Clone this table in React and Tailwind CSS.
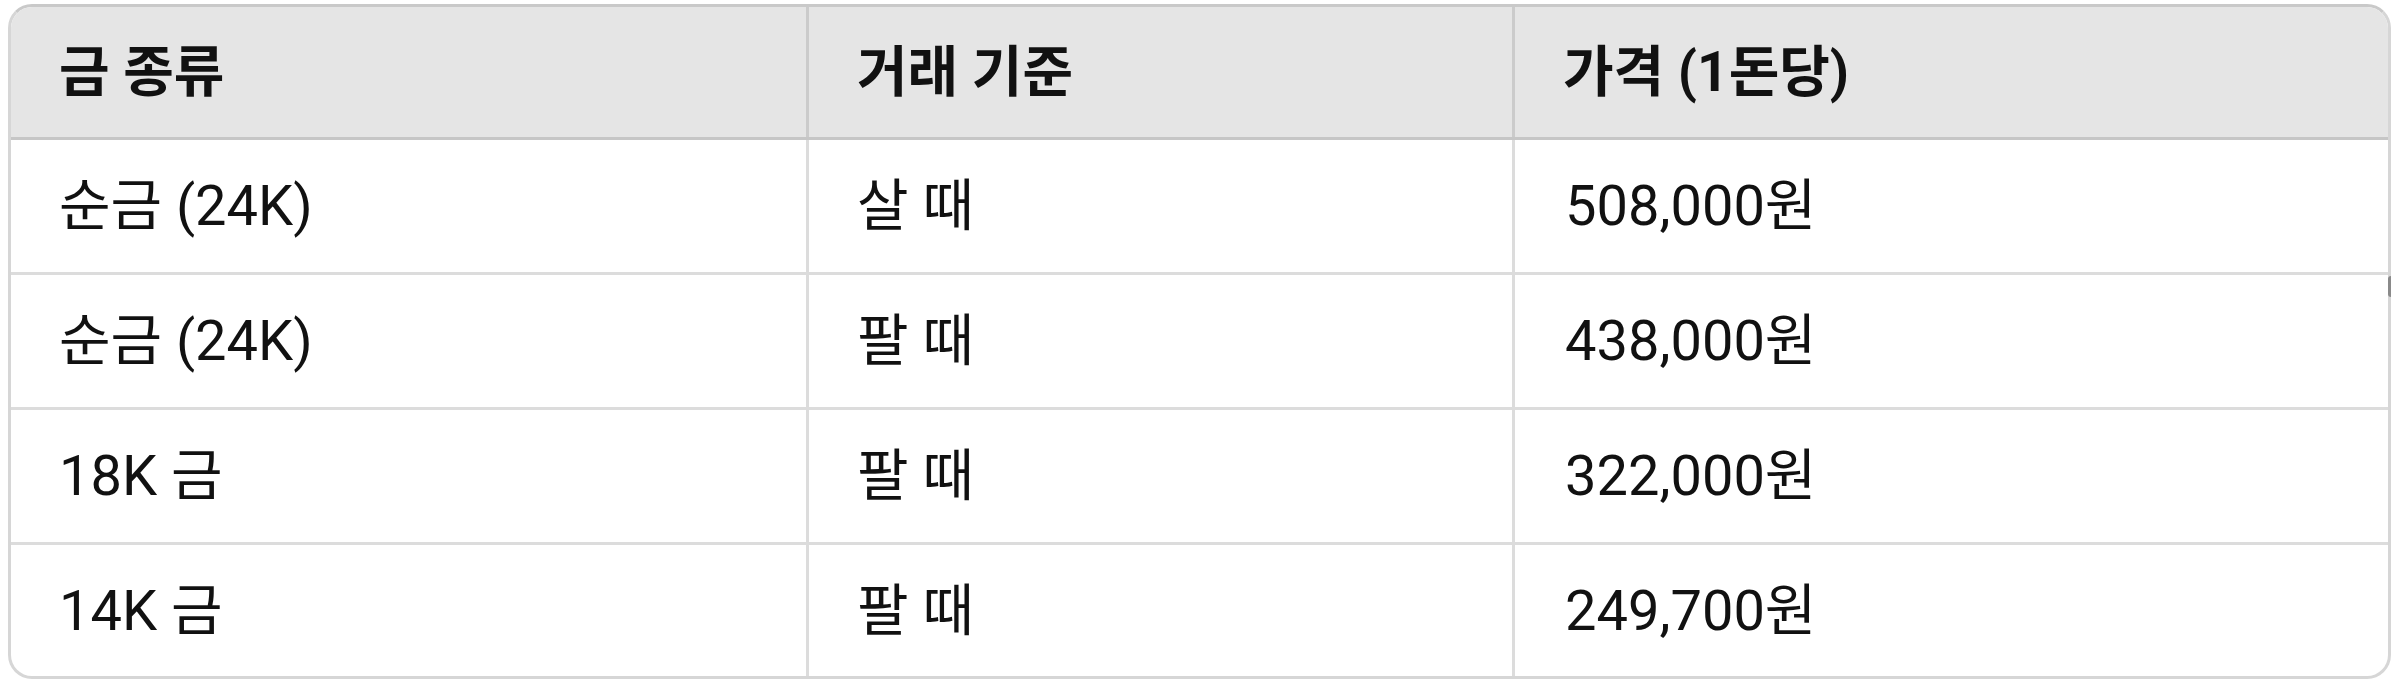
const rows = [
  { kind: "순금 (24K)", deal: "살 때", price: "508,000원" },
  { kind: "순금 (24K)", deal: "팔 때", price: "438,000원" },
  { kind: "18K 금", deal: "팔 때", price: "322,000원" },
  { kind: "14K 금", deal: "팔 때", price: "249,700원" },
];

export default function App() {
  return (
    <div
      className="relative w-[2391px] h-[685px] bg-white pt-[4px] pl-[8px]"
      style={{ fontFamily: 'Roboto, "Noto Sans CJK KR", sans-serif' }}
    >
      <div className="w-[2383px] border-[3px] border-[#d6d6d6] border-t-[#c9c9c9] rounded-[24px] overflow-hidden text-[56px] leading-none text-[#111111]">
        <div className="grid grid-cols-[798px_706px_1fr] h-[133px] bg-[#e5e5e5] border-b-[3px] border-[#c6c6c6] font-bold text-[55px]">
          <div className="flex items-center px-[48px] border-r-[3px] border-[#cbcbcb]">금 종류</div>
          <div className="flex items-center px-[48px] border-r-[3px] border-[#cbcbcb]">거래 기준</div>
          <div className="flex items-center px-[48px]">가격 (1돈당)</div>
        </div>
        {rows.map((r, i) => (
          <div
            key={i}
            className={
              i < rows.length - 1
                ? "grid grid-cols-[798px_706px_1fr] h-[135px] border-b-[3px] border-[#dcdcdc]"
                : "grid grid-cols-[798px_706px_1fr] h-[131px]"
            }
          >
            <div className="flex items-center px-[48px] border-r-[3px] border-[#dcdcdc]">{r.kind}</div>
            <div className="flex items-center px-[48px] border-r-[3px] border-[#dcdcdc]">{r.deal}</div>
            <div className="flex items-center px-[50px]">{r.price}</div>
          </div>
        ))}
      </div>
      <div className="absolute right-0 top-[276px] w-[3px] h-[21px] rounded-l-full bg-[#8a8a8a]" />
    </div>
  );
}
